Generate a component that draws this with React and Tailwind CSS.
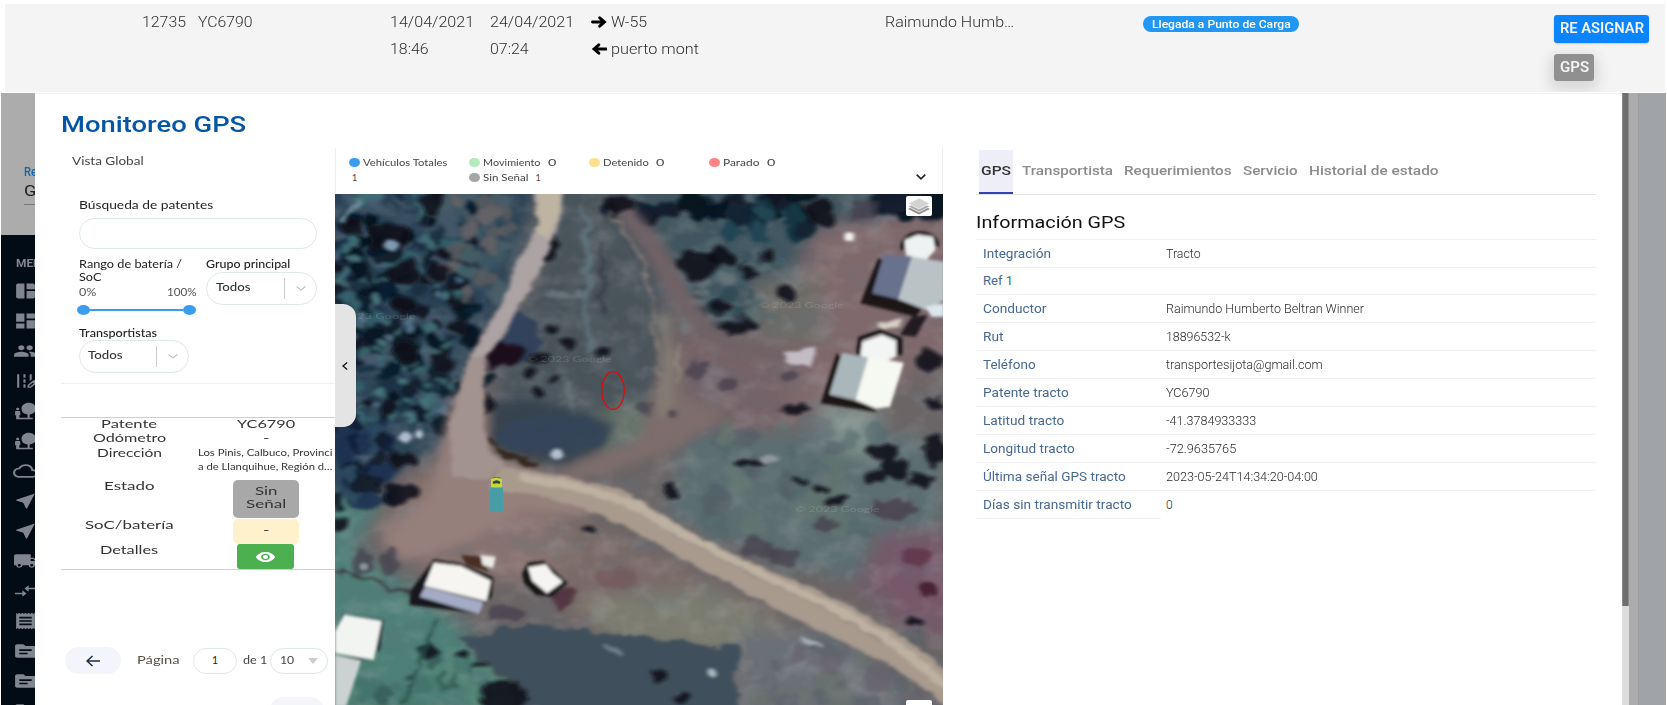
import React, { useLayoutEffect, useRef } from "react";
import {
  MdSpaceDashboard,
  MdDashboard,
  MdPeople,
  MdEditRoad,
  MdNaturePeople,
  MdCloudQueue,
  MdNearMe,
  MdLocalShipping,
  MdCompareArrows,
  MdReceipt,
  MdTopic,
  MdVisibility,
} from "react-icons/md";

// Single line of text stretched horizontally to fill the width of its box.
function T({ className = "", children }) {
  const box = useRef(null);
  const text = useRef(null);
  useLayoutEffect(() => {
    const natural = text.current.offsetWidth;
    if (natural) {
      text.current.style.transform = `scaleX(${box.current.clientWidth / natural})`;
    }
  });
  return (
    <span ref={box} className={`block shrink-0 ${className}`}>
      <span ref={text} className="inline-block origin-left whitespace-nowrap align-top">
        {children}
      </span>
    </span>
  );
}

const SIDE_ICONS = [
  MdSpaceDashboard,
  MdDashboard,
  MdPeople,
  MdEditRoad,
  MdNaturePeople,
  MdNaturePeople,
  MdCloudQueue,
  MdNearMe,
  MdNearMe,
  MdLocalShipping,
  MdCompareArrows,
  MdReceipt,
  MdTopic,
  MdTopic,
  MdTopic,
];

function BoldArrow({ d }) {
  return (
    <svg viewBox="0 0 16 12" className="h-[12px] w-[16px]">
      <path d={d} fill="none" stroke="#000" strokeWidth="2.9" strokeLinecap="round" />
    </svg>
  );
}

function TopRow() {
  return (
    <div className="h-[93px] bg-white pt-[4px] pl-[5px] pr-[2px]">
      <div className="flex h-[88px] items-start overflow-hidden bg-[#f4f4f4] pt-[5px] text-[15.5px] leading-[26.5px] font-light text-[#303030]">
        <T className="ml-[137px] w-[44px]">12735</T>
        <T className="ml-[12px] w-[55px]">YC6790</T>
        <div className="ml-[137px] w-[100px]">
          <T className="w-[84px]">14/04/2021</T>
          <T className="w-[39px]">18:46</T>
        </div>
        <div className="w-[101px]">
          <T className="w-[84px]">24/04/2021</T>
          <T className="w-[39px]">07:24</T>
        </div>
        <div className="w-[294px]">
          <div className="flex items-center">
            <BoldArrow d="M1.500 6H13M8.700 1.800L13.500 6L8.700 10.200" />
            <T className="ml-[4px] w-[36px]">W-55</T>
          </div>
          <div className="flex items-center">
            <BoldArrow d="M15 6H3.500M7.800 1.800L3 6L7.800 10.200" />
            <T className="ml-[4px] w-[88px]">puerto mont</T>
          </div>
        </div>
        <T className="w-[129px]">Raimundo Humb…</T>
        <div className="mt-[7px] ml-[129px] flex h-[16px] w-[156px] items-center justify-center rounded-full bg-[#2196f3] text-[11.5px] leading-[15px] font-medium text-white">
          <T className="w-[139px]">Llegada a Punto de Carga</T>
        </div>
        <div className="mt-[6px] ml-[255px] flex flex-col items-start gap-[11px] text-[14px] leading-[26px] font-semibold text-[#f4f4f4]">
          <div className="flex h-[27.5px] w-[95px] justify-center rounded-[3px] bg-[#0a84ff] shadow-[0_1px_2px_rgba(230,150,60,0.5)]">
            <T className="w-[84px]">RE ASIGNAR</T>
          </div>
          <div className="flex h-[27.5px] w-[40px] justify-center rounded-[3px] bg-[#909090] shadow-[0_5px_14px_4px_rgba(0,0,0,0.12)]">
            <T className="w-[29px]">GPS</T>
          </div>
        </div>
      </div>
    </div>
  );
}

function SideStrip() {
  return (
    <div className="flex w-[35px] shrink-0 flex-col overflow-hidden pl-px">
      <div className="h-[142px] overflow-hidden bg-[#acacac] pt-[71px] pl-[23px]">
        <div className="text-[12px] leading-[17px] font-medium text-[#1565ae]">
          <T className="w-[13px]">Re</T>
        </div>
        <div className="text-[15px] leading-[20px] text-[#222]">
          <T className="w-[12px]">G</T>
        </div>
        <div className="mt-[3px] h-px bg-[#777]" />
      </div>
      <div className="flex-1 overflow-hidden bg-[#020c17] pl-[12px] text-[#80858f]">
        <div className="mt-[22px] ml-[3px] overflow-hidden text-[10px] leading-[14px] font-bold">
          <T className="w-[25px]">MEN</T>
        </div>
        <div className="mt-[10px] flex flex-col gap-[10px]">
          {SIDE_ICONS.map((Icon, i) => (
            <Icon key={i} preserveAspectRatio="none" className="h-[20px] w-[25px] shrink-0" />
          ))}
        </div>
      </div>
    </div>
  );
}

function Select({ className, labelClass, children }) {
  return (
    <div
      className={`flex h-[32.5px] items-center rounded-full border border-[#dde8e8] text-[10.5px] leading-[14px] font-medium text-[#333] ${className}`}
    >
      <T className={`-mt-[3px] ${labelClass}`}>{children}</T>
      <div className="ml-auto h-[21px] w-px bg-[#ccc]" />
      <svg viewBox="0 0 10 5" className="mr-[10px] ml-[11px] h-[5px] w-[10px]">
        <path d="M0.5 0.5L5 4L9.5 0.5" fill="none" stroke="#c4c4c4" strokeWidth="1.3" />
      </svg>
    </div>
  );
}

function Filters() {
  return (
    <div className="h-[236px] border-b border-[#f0f0f0] text-[10.5px] leading-[13px] text-[#222]">
      <div className="flex h-[26px] items-center pl-[11px] text-[#444]">
        <T className="w-[71px]">Vista Global</T>
      </div>
      <div className="flex h-[44px] items-center pt-[18px] pl-[18px]">
        <T className="w-[134px]">Búsqueda de patentes</T>
      </div>
      <div className="ml-[18px] h-[31px] w-[238px] rounded-full border border-[#dde8e8]" />
      <div className="flex h-[78px] pt-[9px] pl-[18px]">
        <div className="w-[127px]">
          <T className="w-[103px]">Rango de batería /</T>
          <T className="w-[23px]">SoC</T>
          <div className="mt-[2px] flex w-[118px] justify-between text-[#555]">
            <T className="w-[18px]">0%</T>
            <T className="w-[30px]">100%</T>
          </div>
          <div className="mt-[6px] -ml-[2px] flex items-center">
            <div className="h-[10px] w-[13px] rounded-[50%] bg-[#3a9cec]" />
            <div className="h-[1.5px] w-[93px] bg-[#3a9cec]" />
            <div className="h-[10px] w-[13px] rounded-[50%] bg-[#3a9cec]" />
          </div>
        </div>
        <div>
          <T className="w-[84px] font-medium">Grupo principal</T>
          <Select className="mt-px w-[111px]" labelClass="ml-[9px] w-[34px]">
            Todos
          </Select>
        </div>
      </div>
      <div className="pl-[18px]">
        <T className="w-[78px] font-medium">Transportistas</T>
        <Select className="w-[110px]" labelClass="ml-[8px] w-[34px]">
          Todos
        </Select>
      </div>
    </div>
  );
}

function Row({ className, label, labelClass, children }) {
  return (
    <div className={`flex ${className}`}>
      <div className="flex w-[136px] justify-center">
        <T className={labelClass}>{label}</T>
      </div>
      <div className="flex w-[137px] flex-col items-center">{children}</div>
    </div>
  );
}

function VehicleTable() {
  return (
    <div className="mt-[33px] h-[153px] border-t border-b border-[#cfcfcf] text-[11.5px] leading-[12px] text-[#333]">
      <Row className="h-[13px]" label="Patente" labelClass="w-[56px]">
        <T className="w-[58px]">YC6790</T>
      </Row>
      <Row className="h-[15px] leading-[14px]" label="Odómetro" labelClass="w-[73px]">
        <T className="w-[6px]">-</T>
      </Row>
      <Row className="h-[34px] leading-[14px]" label="Dirección" labelClass="w-[65px]">
        <T className="w-[135px] text-[8.5px] leading-[15px]">Los Pinis, Calbuco, Provinci</T>
        <T className="w-[135px] text-[8.5px] leading-[13px]">a de Llanquihue, Región d…</T>
      </Row>
      <Row className="h-[39px] leading-[11px]" label="Estado" labelClass="w-[50px]">
        <div className="flex h-[38px] w-[66px] flex-col items-center rounded-[5px] bg-[#a8a8a8] pt-[3.500px] leading-[13.500px]">
          <T className="w-[22px]">Sin</T>
          <T className="w-[40px]">Señal</T>
        </div>
      </Row>
      <Row className="h-[25px] leading-[11px]" label="SoC/batería" labelClass="w-[88px]">
        <div className="flex h-[24.5px] w-[66px] justify-center rounded-[5px] bg-[#fff1cc] leading-[22px]">
          <T className="w-[6px]">-</T>
        </div>
      </Row>
      <Row className="h-[25px] leading-[11px]" label="Detalles" labelClass="w-[58px]">
        <div className="flex h-[25px] w-[57px] items-center justify-center rounded-[3px] bg-[#4caf50]">
          <MdVisibility preserveAspectRatio="none" className="h-[16px] w-[21px] text-white" />
        </div>
      </Row>
    </div>
  );
}

function Pagination() {
  return (
    <div className="mt-[77px] text-[10.5px] leading-[25px] text-[#444]">
      <div className="flex h-[27px] items-center">
        <div className="ml-[4px] flex h-[27px] w-[56px] items-center justify-center rounded-full bg-[#f4f5fb]">
          <svg viewBox="0 0 14 12" className="h-[12px] w-[14px]">
            <path d="M14 6H1M6.5 1L1 6L6.5 11" fill="none" stroke="#1d2b3f" strokeWidth="1.5" />
          </svg>
        </div>
        <T className="ml-[16px] w-[42px] text-[#5a5048]">Página</T>
        <div className="ml-[14px] flex h-[26px] w-[44px] items-center justify-center rounded-full border border-[#dde8e8]">
          <T className="w-[6px] text-[#222]">1</T>
        </div>
        <T className="ml-[6px] w-[24px]">de 1</T>
        <div className="ml-[3px] flex h-[26px] w-[58px] items-center rounded-full border border-[#dde8e8] pl-[9px]">
          <T className="w-[14px]">10</T>
          <svg viewBox="0 0 10 6" className="ml-[14px] h-[6px] w-[10px]">
            <path d="M0 0H10L5 6Z" fill="#ccc" />
          </svg>
        </div>
      </div>
      <div className="mt-[23px] ml-[209px] h-[27px] w-[54px] rounded-full bg-[#f4f5fb]" />
    </div>
  );
}

const LEGEND = [
  { label: "Movimiento", value: "0", dot: "bg-[#b4ebbd]", w: "w-[58px]", sub: true },
  { label: "Detenido", value: "0", dot: "bg-[#ffdf8c]", w: "w-[46px]" },
  { label: "Parado", value: "0", dot: "bg-[#fc8484]", w: "w-[37px]" },
];

function Legend() {
  return (
    <div className="flex h-[46px] border-x border-[#ededed] pt-[7px] pl-[13px] text-[9px] leading-[15px] text-[#444]">
      <div className="w-[120px]">
        <div className="flex items-center">
          <div className="h-[9px] w-[10.5px] shrink-0 rounded-[50%] bg-[#3a9cec]" />
          <T className="ml-[3px] w-[85px]">Vehículos Totales</T>
        </div>
        <T className="ml-[3px] w-[5px]">1</T>
      </div>
      {LEGEND.map((l) => (
        <div key={l.label} className="w-[120px]">
          <div className="flex items-center">
            <div className={`h-[9px] w-[10.5px] rounded-[50%] ${l.dot}`} />
            <T className={`ml-[3px] ${l.w}`}>{l.label}</T>
            <T className="ml-[7px] w-[8px]">{l.value}</T>
          </div>
          {l.sub && (
            <div className="flex items-center">
              <div className="h-[9px] w-[10.5px] rounded-[50%] bg-[#a6a6a6]" />
              <T className="ml-[3px] w-[46px]">Sin Señal</T>
              <T className="ml-[7px] w-[5px] text-[#6b3c2c]">1</T>
            </div>
          )}
        </div>
      ))}
      <svg viewBox="0 0 10 6" className="mt-[19px] ml-auto mr-[16px] h-[6px] w-[10px]">
        <path d="M0.7 0.7L5 4.8L9.3 0.7" fill="none" stroke="#222" strokeWidth="1.6" />
      </svg>
    </div>
  );
}

// Deterministic scatter of foliage spots.
function spots(seed, n, x0, y0, x1, y1, colors, rMin, rMax) {
  let s = seed * 7919;
  const rnd = () => {
    s = (s * 16807) % 2147483647;
    return s / 2147483647;
  };
  rnd();
  return Array.from({ length: n }, () => ({
    x: x0 + rnd() * (x1 - x0),
    y: y0 + rnd() * (y1 - y0),
    rx: rMin + rnd() * (rMax - rMin),
    ry: rMin + rnd() * (rMax - rMin),
    c: colors[Math.floor(rnd() * colors.length)],
  }));
}

const DARK = ["#060c18", "#0a1626", "#081a2a", "#10101c"];
const MIX = ["#0a1424", "#34626e", "#465a6a", "#183040", "#42747a", "#4d5f72", "#1c2c40", "#2c4658"];
const FOREST = [
  ...spots(11, 190, 12, 163, 320, 860, MIX, 10, 34),
  ...spots(77, 50, 300, 163, 450, 480, ["#3c5a64", "#5a5c60", "#4a6068", "#243442", "#6a6668"], 12, 32),
  ...spots(31, 95, 12, 200, 400, 860, DARK, 10, 30),
  ...spots(53, 45, 12, 250, 340, 860, ["#4a7c84", "#5a7890", "#3a686c"], 6, 16),
  ...spots(5, 50, 12, 840, 150, 1090, ["#101c38", "#1c2f50", "#0c1424", "#2a4860"], 12, 34),
];
const TOP_TREES = [
  ...spots(9, 30, 690, 163, 1220, 225, DARK, 16, 36),
  ...spots(19, 12, 1000, 200, 1200, 280, ["#123040", "#1c4452", "#0c1c2c"], 18, 36),
  ...spots(3, 16, 1390, 158, 1549, 205, ["#060a18", "#101828"], 24, 44),
];
const CENTER_TREES = [
  ...spots(21, 50, 900, 330, 1130, 560, ["#3c5c6a", "#64807e", "#27404c", "#7a8688", "#1a2430", "#4c6c78"], 10, 28),
  ...spots(14, 36, 940, 860, 1380, 1180, ["#4c6468", "#5f6e70", "#64786e", "#4a5860"], 20, 52),
  ...spots(41, 30, 1080, 1480, 1480, 1695, ["#5c6468", "#625a66", "#667068", "#545e64"], 16, 44),
  ...spots(18, 30, 12, 1560, 440, 1695, ["#3a6c60", "#5a9078", "#447868", "#24443f"], 12, 34),
];
const HOLES = [
  [935, 375, 58, 44], [990, 350, 40, 24], [1058, 398, 20, 16], [1106, 345, 18, 22], [1148, 455, 28, 24], [988, 500, 28, 24],
  [1030, 562, 52, 20], [1235, 220, 38, 40], [190, 640, 30, 38], [185, 400, 50, 36], [190, 490, 34, 26], [150, 290, 60, 44],
  [270, 400, 26, 30], [255, 190, 32, 38], [50, 260, 34, 34], [388, 790, 24, 28], [550, 320, 24, 44],
  [530, 655, 34, 14], [600, 610, 14, 16], [555, 570, 14, 18], [510, 700, 16, 20], [565, 712, 16, 14], [525, 762, 16, 12],
  [685, 640, 14, 14], [730, 190, 38, 30], [180, 960, 36, 18], [180, 1060, 44, 34], [645, 1166, 20, 14], [860, 1050, 24, 20],
  [1515, 660, 34, 32], [1180, 812, 44, 14], [1525, 790, 24, 18], [1400, 935, 36, 26], [1430, 985, 32, 34], [1380, 1008, 26, 16],
  [1490, 1025, 32, 22], [1530, 930, 28, 44], [1240, 1045, 22, 14], [1280, 1080, 26, 16], [1190, 1015, 22, 10],
  [1060, 970, 30, 10], [830, 1612, 24, 22], [250, 1532, 26, 24], [440, 1670, 60, 50], [378, 1576, 22, 12],
  [330, 1540, 16, 12], [885, 1670, 20, 18], [1480, 1445, 24, 16], [25, 1150, 22, 24],
];
const SOFT_HOLES = [
  [930, 690, 24, 30], [1000, 735, 26, 18], [800, 800, 18, 20], [870, 820, 16, 18], [1255, 1150, 28, 16], [1160, 710, 22, 14],
  [80, 1268, 26, 38], [150, 1268, 22, 38], [1350, 210, 40, 30], [1080, 1225, 44, 30], [1140, 1250, 40, 28], [440, 1420, 46, 24],
];

function Blobs({ items, opacity = 1 }) {
  return (
    <g opacity={opacity}>
      {items.map((b, i) => (
        <ellipse key={i} cx={b.x} cy={b.y} rx={b.rx} ry={b.ry} fill={b.c} />
      ))}
    </g>
  );
}

function Satellite() {
  return (
    <svg viewBox="12 162 1537 1533" preserveAspectRatio="none" className="block h-full w-full">
      <defs>
        <filter id="soft" x="-10%" y="-10%" width="120%" height="120%">
          <feTurbulence type="fractalNoise" baseFrequency="0.022" numOctaves="3" seed="4" result="n" />
          <feDisplacementMap in="SourceGraphic" in2="n" scale="46" xChannelSelector="R" yChannelSelector="G" />
          <feGaussianBlur stdDeviation="5.5" />
        </filter>
        <filter id="wide" x="-20%" y="-20%" width="140%" height="140%">
          <feGaussianBlur stdDeviation="24" />
        </filter>
        <filter id="mid" x="-20%" y="-20%" width="140%" height="140%">
          <feGaussianBlur stdDeviation="13" />
        </filter>
        <filter id="edge" x="-10%" y="-10%" width="120%" height="120%">
          <feTurbulence type="fractalNoise" baseFrequency="0.03" numOctaves="2" seed="8" result="n" />
          <feDisplacementMap in="SourceGraphic" in2="n" scale="20" xChannelSelector="R" yChannelSelector="G" />
          <feGaussianBlur stdDeviation="5" />
        </filter>
        <filter id="roof" x="-10%" y="-10%" width="120%" height="120%">
          <feGaussianBlur stdDeviation="4" />
        </filter>
        <filter id="grain" x="0" y="0" width="100%" height="100%">
          <feTurbulence type="fractalNoise" baseFrequency="0.014 0.016" numOctaves="3" seed="2" />
          <feColorMatrix values="0 0 0 0 0.62  0 0 0 0 0.6  0 0 0 0 0.6  2 0 0 0 -0.9" />
        </filter>
        <filter id="shade" x="0" y="0" width="100%" height="100%">
          <feTurbulence type="fractalNoise" baseFrequency="0.010 0.012" numOctaves="3" seed="12" />
          <feColorMatrix values="0 0 0 0 0.12  0 0 0 0 0.16  0 0 0 0 0.2  0 2.2 0 0 -1.0" />
        </filter>
      </defs>

      <rect x="0" y="150" width="1560" height="1560" fill="#6b6566" />
      <g filter="url(#wide)">
        <path d="M-40 100H540L440 500L330 760L300 900L-40 1180Z" fill="#2a4354" />
        <path d="M560 100H700L840 420V760L760 900H420V650L520 420Z" fill="#4a525a" />
        <path d="M700 100H1600V210L1380 260L1220 300L1150 560L980 560L820 300Z" fill="#40545e" />
        <path d="M1230 260L1600 210V620L1240 860L860 900L850 640L1100 600Z" fill="#80696c" />
        <path d="M1060 420L1240 400L1240 620L1090 600Z" fill="#6d6c68" />
        <path d="M880 560L1130 640L1180 860L900 900L740 960L690 880L850 740Z" fill="#746468" />
        <path d="M640 840L840 760V900L640 960Z" fill="#68746c" />
        <path d="M900 880H1380L1549 900V1200L1380 1320L1150 1280L850 1120Z" fill="#5c6e70" />
        <path d="M1230 780L1400 820L1370 960L1250 920Z" fill="#80928c" />
        <path d="M1390 1180L1600 1160V1520L1440 1450L1330 1330Z" fill="#765868" />
        <path d="M210 1000L480 1010L620 1120L580 1330L240 1300L120 1180Z" fill="#89736f" />
        <path d="M560 1100L900 1280L1150 1440L1030 1510L600 1450Z" fill="#7a6b68" />
        <path d="M620 1380L960 1340L1160 1470L1080 1560L700 1500Z" fill="#7c7d70" />
        <path d="M-30 1060L130 1080L60 1240L210 1340L330 1450L500 1720H-30Z" fill="#4e8076" />
        <path d="M1030 1460L1280 1480L1540 1690V1730H1030Z" fill="#6c7074" />
      </g>

      <rect x="0" y="150" width="1560" height="1560" filter="url(#shade)" opacity="0.35" />
      <rect x="0" y="150" width="1560" height="1560" filter="url(#grain)" opacity="0.22" />

      <g filter="url(#soft)">
        <Blobs items={FOREST} opacity={0.85} />
        <Blobs items={TOP_TREES} opacity={0.9} />
        <Blobs items={CENTER_TREES} opacity={0.5} />
        <path d="M440 500L520 540L545 610L490 660L420 640Z" fill="#33435c" />
        <path d="M540 460H650M600 720L620 860" fill="none" stroke="#68747e" strokeWidth="12" />
        <path d="M640 200C655 380 645 520 655 640" fill="none" stroke="#5f727c" strokeWidth="16" />
        <path d="M690 300V520" fill="none" stroke="#393f4a" strokeWidth="12" />
        <path d="M330 1500L500 1450L680 1478L860 1500L1030 1522V1710H500L420 1600Z" fill="#3f4f5b" />
      </g>

      <g filter="url(#mid)">
        <path d="M730 200C850 330 850 440 930 540C970 610 1060 650 1220 650" fill="none" stroke="#716266" strokeWidth="46" />
        <path d="M850 620L900 640L890 760L1000 820L880 920L700 1000L560 1020L640 960L780 900Z" fill="#7d6d6c" />
        <path d="M840 520C860 640 850 740 845 830" fill="none" stroke="#8a8578" strokeWidth="20" />
        <path d="M310 760L390 760L410 940L560 1010L760 1060L640 1130L480 1110L360 1200L180 1260L130 1200L250 1060Z" fill="#95807b" />
        <path d="M400 780H520L720 850L690 930L600 975L480 960L395 900Z" fill="#333f4c" opacity="0.85" />
      </g>

      <g filter="url(#soft)">
        <path d="M700 220C790 320 805 420 822 560C832 680 835 740 828 790" fill="none" stroke="#857c78" strokeWidth="8" />
        <path d="M885 600V720" fill="none" stroke="#9a9484" strokeWidth="8" />
        <ellipse cx="560" cy="885" rx="140" ry="62" fill="#33465a" opacity="0.8" />
        <path d="M408 900C430 950 480 960 530 970" fill="none" stroke="#33261e" strokeWidth="16" />
        <path d="M385 640L430 610L490 630L470 670L410 690Z" fill="#1c0f1a" />
        {HOLES.map(([x, y, rx, ry], i) => (
          <ellipse key={i} cx={x} cy={y} rx={rx} ry={ry} fill="#0e111a" opacity="0.88" />
        ))}
        {SOFT_HOLES.map(([x, y, rx, ry], i) => (
          <ellipse key={i} cx={x} cy={y} rx={rx} ry={ry} fill="#443d48" opacity="0.7" />
        ))}
        <ellipse cx="590" cy="1378" rx="32" ry="30" fill="#4e2f3c" opacity="0.85" />
        <ellipse cx="1512" cy="1350" rx="24" ry="20" fill="#4a2436" />
        <ellipse cx="1480" cy="1250" rx="44" ry="26" fill="#643a4e" />
        <ellipse cx="720" cy="1310" rx="60" ry="26" fill="#6f5052" opacity="0.5" />
        <ellipse cx="1420" cy="1110" rx="56" ry="30" fill="#483f48" opacity="0.8" />
        <path d="M20 1290L230 1370" stroke="#3c3a40" strokeWidth="10" fill="none" />
        <path d="M270 1430L180 1700" stroke="#284c44" strokeWidth="9" fill="none" />
      </g>

      <g filter="url(#edge)">
        <path
          d="M508 130H590L580 240L530 390L470 520L425 610L395 650L390 770L390 880L400 930L440 970L400 1020L310 1010L300 870L318 770L350 660L380 590L440 480L468 370L510 300L526 230Z"
          fill="#a3938f"
        />
        <path d="M508 130H590L580 240L535 380L470 510L425 600L400 640L360 650L440 480L468 370L510 300L526 230Z" fill="#aca3a4" />
        <path d="M520 130H588L578 230L548 300L520 270L526 230Z" fill="#bfb4a1" />
        <path
          d="M430 980L600 1012L740 1052L830 1115L920 1185L1060 1265L1180 1325L1320 1402L1430 1475L1580 1610V1715L1500 1645L1400 1562L1200 1452L1050 1362L900 1262L750 1162L620 1095L500 1060L400 1050Z"
          fill="#a89a8d"
        />
        <path d="M480 1010L640 1045L780 1100L900 1190L1100 1310L1300 1420L1430 1515L1560 1640" fill="none" stroke="#bdb1a2" strokeWidth="26" />
        <path d="M860 1180L1060 1300L1240 1400L1400 1510" fill="none" stroke="#978b80" strokeWidth="4" />
        <path d="M1150 640L1225 620L1215 680L1150 670Z" fill="#c4bcc4" />
        <ellipse cx="1312" cy="290" rx="15" ry="13" fill="#f4f4f4" />
        <ellipse cx="155" cy="315" rx="22" ry="16" fill="#7f9bb4" />
        <path d="M22 250L80 180" stroke="#6c8898" strokeWidth="14" />
        <path d="M1185 1490L1230 1505L1250 1525L1210 1515Z" fill="#a8b4b4" />
        <ellipse cx="965" cy="1597" rx="12" ry="12" fill="#a8bcc0" />
        <ellipse cx="572" cy="942" rx="14" ry="16" fill="#b4c0cc" />
        <ellipse cx="1110" cy="958" rx="24" ry="14" fill="#90989c" />
        <ellipse cx="190" cy="892" rx="14" ry="16" fill="#b0bcd0" />
        <ellipse cx="226" cy="884" rx="12" ry="12" fill="#c0c8d4" />
        <path d="M690 1520L740 1540" stroke="#70808c" strokeWidth="12" />
        <path d="M1380 545L1450 535L1440 560L1400 570Z" fill="#d8cfc4" />
      </g>

      <g filter="url(#roof)">
        <path d="M1385 355L1340 490L1480 530L1500 500L1380 460L1400 360Z" fill="#1b1218" />
        <path d="M1448 330C1440 270 1530 260 1534 320" fill="none" stroke="#1c181c" strokeWidth="12" />
        <path d="M1452 300L1485 284L1524 290L1530 330L1505 362L1455 345Z" fill="#eef2f2" />
        <path d="M1400 342L1470 350L1438 478L1370 460Z" fill="#68728e" />
        <path d="M1470 350L1552 365V480L1510 512L1436 478Z" fill="#b9c3c6" />
        <path d="M1505 500L1552 490V530L1520 530Z" fill="#dce6ee" />
        <path d="M1470 530L1510 525L1480 590L1440 585Z" fill="#241a20" />
        <path d="M1335 645L1340 595L1390 575L1440 597V645" fill="none" stroke="#151418" strokeWidth="12" />
        <path d="M1345 605L1395 584L1430 602L1430 650L1400 666L1340 648Z" fill="#f2f5f3" />
        <path d="M1280 640L1240 790L1380 815L1385 800L1262 765L1290 650Z" fill="#1b1214" />
        <path d="M1295 638L1360 655L1330 780L1262 762Z" fill="#a9b7ba" />
        <path d="M1360 650L1450 668L1415 800L1380 806L1328 780Z" fill="#f6f8f2" />

        <path d="M262 1258L330 1270L412 1312L408 1370L380 1400L370 1420L200 1395L205 1350Z" fill="#19181a" />
        <path d="M262 1268L330 1278L406 1322L395 1384L238 1338Z" fill="#f6f5f2" />
        <path d="M240 1340L388 1386L376 1422L226 1370Z" fill="#a4abc4" />
        <path d="M330 1245L385 1250L400 1295L345 1275Z" fill="#4a2e22" />
        <path d="M380 1245L418 1250L412 1285L385 1275Z" fill="#eceae6" />
        <path d="M485 1300L500 1268L540 1262L600 1330L560 1370L520 1365L490 1330Z" fill="#151417" />
        <path d="M500 1282L545 1273L562 1300L588 1325L548 1360L510 1322Z" fill="#f6f4f3" />
        <path d="M30 1422L135 1440L125 1530L80 1562L20 1540Z" fill="#1b2426" />
        <path d="M36 1424L130 1443L110 1560L12 1540V1475Z" fill="#f2f4f2" />
        <path d="M12 1545L78 1562L40 1700H12Z" fill="#ccd2d2" />
        <circle cx="85" cy="1280" r="11" fill="#8a949a" />
      </g>
    </svg>
  );
}

function MapView() {
  return (
    <div className="relative h-[511px] overflow-hidden">
      <Satellite />
      <div className="absolute top-[114px] left-[22px] text-[8px] leading-[16px] text-white/15">
        <T className="w-[58px]">23 Google</T>
      </div>
      <div className="absolute top-[103px] left-[424px] text-[8px] leading-[16px] text-white/15">
        <T className="w-[84px]">© 2023 Google</T>
      </div>
      <div className="absolute top-[157px] left-[192px] text-[8px] leading-[16px] text-white/15">
        <T className="w-[84px]">© 2023 Google</T>
      </div>
      <div className="absolute top-[307px] left-[460px] text-[8px] leading-[16px] text-white/15">
        <T className="w-[84px]">© 2023 Google</T>
      </div>
      <svg viewBox="0 0 24 39" className="absolute top-[177px] left-[266px] h-[39px] w-[24px]">
        <ellipse cx="12" cy="19.5" rx="11.2" ry="18.8" fill="none" stroke="#f40000" strokeWidth="1.2" />
      </svg>
      <svg viewBox="0 0 13 34" className="absolute top-[283px] left-[155px] h-[34px] w-[13px]">
        <rect x="1" y="0" width="11" height="11" rx="2" fill="#c3da3c" />
        <path d="M1.5 1.2Q6.5 -0.8 11.5 1.2" stroke="#55603c" strokeWidth="0.9" fill="none" />
        <path d="M2.5 5Q6.5 1.5 10.5 5L9.5 7Q6.5 5.6 3.5 7Z" fill="#3a4048" />
        <rect x="0" y="10.500" width="13" height="23.500" rx="1" fill="#479ca6" />
      </svg>
      <div className="absolute top-[110px] left-0 flex h-[123px] w-[21px] items-center justify-center rounded-r-[13px] bg-[#e4e4e4] pr-[1px]">
        <svg viewBox="0 0 6 8" className="h-[8px] w-[6px]">
          <path d="M5.2 0.6L1 4L5.2 7.400" fill="none" stroke="#111" strokeWidth="1.3" />
        </svg>
      </div>
      <div className="absolute top-[2px] left-[571px] flex h-[20px] w-[26px] items-center justify-center rounded-[2px] bg-white">
        <svg viewBox="0 0 24 18" className="h-[18px] w-[24px]">
          <path d="M1 12L12 6.500L23 12L12 17.500Z" fill="#8e8e8e" />
          <path d="M1 9.500L12 4L23 9.500L12 15Z" fill="#a8a8a8" stroke="#fff" strokeWidth="0.7" />
          <path d="M1 6.500L12 1L23 6.500L12 12Z" fill="#d2d2d2" stroke="#fff" strokeWidth="0.7" />
        </svg>
      </div>
      <div className="absolute top-[506px] left-[571px] h-[8px] w-[26px] rounded-t-[2px] bg-white" />
    </div>
  );
}

const TABS = [
  ["Transportista", "w-[91px]"],
  ["Requerimientos", "w-[108px]"],
  ["Servicio", "w-[55px]"],
  ["Historial de estado", "w-[129px]"],
];

const INFO = [
  ["Integración", "w-[68px]", "Tracto", "w-[35px]", "h-[28px]"],
  ["Ref 1", "w-[30px]", "", "w-[1px]", "h-[27px]"],
  ["Conductor", "w-[63px]", "Raimundo Humberto Beltran Winner", "w-[198px]", "h-[28px]"],
  ["Rut", "w-[20px]", "18896532-k", "w-[65px]", "h-[28px]"],
  ["Teléfono", "w-[53px]", "transportesijota@gmail.com", "w-[157px]", "h-[28px]"],
  ["Patente tracto", "w-[86px]", "YC6790", "w-[43px]", "h-[28px]"],
  ["Latitud tracto", "w-[81px]", "-41.3784933333", "w-[90px]", "h-[28px]"],
  ["Longitud tracto", "w-[92px]", "-72.9635765", "w-[70px]", "h-[28px]"],
  ["Última señal GPS tracto", "w-[143px]", "2023-05-24T14:34:20-04:00", "w-[152px]", "h-[28px]"],
  ["Días sin transmitir tracto", "w-[149px]", "0", "w-[7px]", "h-[28px]"],
];

function InfoPanel() {
  return (
    <div className="ml-[33px] w-[620px] pt-[2px]">
      <div className="flex h-[45px] gap-[11px] border-b border-[#e3e3e3] pl-[3px] text-[13px] leading-[42px] font-medium text-[#8c8c8c]">
        <div className="flex h-[44px] w-[34px] justify-center border-b-2 border-[#2f45b5] bg-[#eeeef8] text-[#333]">
          <T className="w-[30px]">GPS</T>
        </div>
        <div className="-ml-[2px] flex gap-[11px]">
          {TABS.map(([t, w]) => (
            <T key={t} className={w}>
              {t}
            </T>
          ))}
        </div>
      </div>
      <div className="flex h-[45px] items-center border-b border-[#f1f1f1] pt-[9px] text-[17px] leading-[24px] font-normal text-[#111]">
        <T className="w-[149px]">Información GPS</T>
      </div>
      {INFO.map(([k, kw, v, vw, h], i) => (
        <div key={k} className={`flex items-center ${h}`}>
          <div className="flex h-full w-[185px] items-center border-b border-[#f1f1f1] pl-[7px] text-[13px] leading-[18px] font-normal text-[#48698f]">
            <T className={kw}>{k}</T>
          </div>
          <div
            className={`flex h-full flex-1 items-center pl-[5px] text-[12px] leading-[18px] font-light text-[#2a2a2a] ${
              i < INFO.length - 1 ? "border-b border-[#f1f1f1]" : ""
            }`}
          >
            <T className={vw}>{v}</T>
          </div>
        </div>
      ))}
    </div>
  );
}

export default function App() {
  return (
    <div className="h-[705px] w-[1667px] overflow-hidden bg-white font-['Roboto',sans-serif]">
      <TopRow />
      <div className="flex h-[612px]">
        <SideStrip />
        <main className="w-[1587px] shrink-0 overflow-hidden bg-white">
          <div className="flex h-[55px] items-center border-t border-[#f0f0f0] pt-[6px] pl-[26px] text-[22.5px] leading-[30px] font-medium text-[#0656a6]">
            <T className="w-[185px]">Monitoreo GPS</T>
          </div>
          <div className="flex h-[557px]">
            <div className="ml-[26px] w-[274px] shrink-0 font-['Lato',sans-serif]">
              <Filters />
              <VehicleTable />
              <Pagination />
            </div>
            <div className="w-[608px] shrink-0 font-['Lato',sans-serif]">
              <Legend />
              <MapView />
            </div>
            <InfoPanel />
          </div>
        </main>
        <div className="w-[7px] shrink-0 bg-[#dcdcdc]">
          <div className="h-[513px] border-x border-[#8a8a8a] bg-[#6e6e6e]" />
        </div>
        <div className="w-[9px] shrink-0 bg-[#acacac]" />
        <div className="w-[28px] shrink-0 border-l border-[#9a9ea2] bg-[#a0a4a8]" />
      </div>
    </div>
  );
}
